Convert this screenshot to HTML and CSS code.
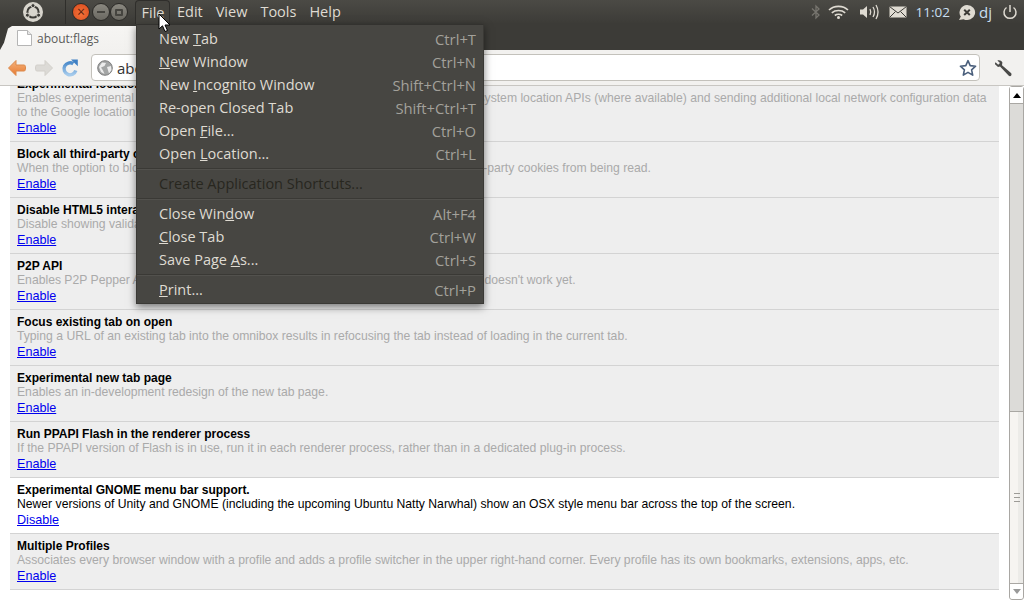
FILE: index.html
```html
<!DOCTYPE html>
<html lang="en">
<head>
<meta charset="utf-8">
<title>about:flags</title>
<link rel="stylesheet" href="styles.css">
</head>
<body>
<div class="panel">
  <div class="logo-cell">
    <svg width="22" height="22" viewBox="0 0 22 22"><circle cx="11" cy="11" r="10" fill="#d8d5cd"/><circle cx="11" cy="11" r="5.6" fill="none" stroke="#3c3b37" stroke-width="2"/><circle cx="11" cy="4.6" r="2" fill="#3c3b37" stroke="#d8d5cd"/><circle cx="5.4" cy="14.2" r="2" fill="#3c3b37" stroke="#d8d5cd"/><circle cx="16.6" cy="14.2" r="2" fill="#3c3b37" stroke="#d8d5cd"/></svg>
  </div>
  <div class="win-btns">
    <span class="wb wb-close">×</span>
    <span class="wb wb-min"><i class="min-bar"></i></span>
    <span class="wb wb-max"><i class="max-box"></i></span>
  </div>
  <nav class="menubar">
    <span class="mb-item mb-open">File</span>
    <span class="mb-item">Edit</span>
    <span class="mb-item">View</span>
    <span class="mb-item">Tools</span>
    <span class="mb-item">Help</span>
  </nav>
  <div class="tray">
    <svg class="t-bt" width="10" height="16" viewBox="0 0 10 16"><path d="M1 4.500 8 11 5 14V2l3 3-7 6.500" fill="none" stroke="#77756f" stroke-width="1.300"/></svg>
    <svg class="t-wifi" width="21" height="14" viewBox="0 0 21 14"><g fill="none" stroke="#dfdbd2" stroke-width="1.600"><path d="M1 5c5-4.800 14-4.800 19 0"/><path d="M3.800 7.800c3.500-3 9.900-3 13.400 0"/><path d="M6.800 10.500c2-1.500 5.400-1.500 7.400 0"/></g><circle cx="10.500" cy="12.500" r="1.500" fill="#dfdbd2"/></svg>
    <svg class="t-vol" width="20" height="16" viewBox="0 0 20 16"><path d="M1 5.500h3L8 2v12L4 10.500H1z" fill="#dfdbd2"/><g fill="none" stroke="#dfdbd2" stroke-width="1.300"><path d="M11 5c1 2 1 4 0 6"/><path d="M14 3c1.800 3 1.800 7 0 10"/><path d="M17 1c2.600 4.500 2.600 9.500 0 14"/></g></svg>
    <svg class="t-mail" width="18" height="12" viewBox="0 0 18 12"><rect x=".5" y=".5" width="17" height="11" fill="#dfdbd2"/><path d="M.5.500 9 7l8.500-6.500M.5 11.500 6.500 5.500M17.500 11.500l-6-6" fill="none" stroke="#3c3b37"/></svg>
    <span class="t-time">11:02</span>
    <svg class="t-chat" width="18" height="17" viewBox="0 0 18 17"><path d="M9 1a8 7.500 0 1 1-3.500 14.200L1 16l1.800-3.400A8 7.500 0 0 1 9 1z" fill="#dfdbd2"/><path d="M6.200 5.800 11.800 11M11.800 5.800 6.200 11" stroke="#3c3b37" stroke-width="2"/></svg>
    <span class="t-user">dj</span>
    <svg class="t-power" width="16" height="16" viewBox="0 0 16 16"><path d="M4.500 3.500a6 6 0 1 0 7 0" fill="none" stroke="#dfdbd2" stroke-width="1.500"/><path d="M8 1v7" stroke="#dfdbd2" stroke-width="1.500"/></svg>
  </div>
</div>

<div class="tabstrip">
  <div class="tab">
    <svg width="15" height="16" viewBox="0 0 15 16"><path d="M.5.500h10l4 4v11H.5z" fill="#fff" stroke="#b5b5b5"/><path d="M10.500.500v4h4" fill="#e6e6e6" stroke="#b5b5b5"/></svg>
    <span class="tab-title">about:flags</span>
  </div>
</div>

<div class="toolbar">
  <svg class="tb-icon" width="20" height="18" viewBox="0 0 20 18"><defs><linearGradient id="bk" x1="0" y1="0" x2="0" y2="1"><stop offset="0" stop-color="#f4b27c"/><stop offset="1" stop-color="#e87a30"/></linearGradient></defs><path d="M9 1.500 1.500 9 9 16.500V12h8c1.200 0 1.500-1 1.500-3s-.3-3-1.500-3H9z" fill="url(#bk)" stroke="#dc8a4c"/></svg>
  <svg class="tb-icon" width="20" height="18" viewBox="0 0 20 18"><path d="M11 1.500 18.500 9 11 16.500V12H3c-1.200 0-1.500-1-1.500-3s.3-3 1.500-3h8z" fill="#dcdad6" stroke="#d2cfca"/></svg>
  <svg class="tb-icon" width="18" height="20" viewBox="0 0 18 20"><defs><linearGradient id="rl" x1="0" y1="0" x2="0" y2="1"><stop offset="0" stop-color="#4d8ccb"/><stop offset="1" stop-color="#a6cbec"/></linearGradient></defs><path d="M14.800 12.500A6 6 0 1 1 12.300 5.800" fill="none" stroke="url(#rl)" stroke-width="3.400"/><path d="M10 1.500h6.800v6.800z" fill="#3f80c4"/></svg>
  <div class="omnibox">
    <svg width="16" height="16" viewBox="0 0 16 16"><circle cx="8" cy="8" r="7.300" fill="#a3a5a5" stroke="#7e7e7e"/><path d="M5 2.500 9 3 7.500 6 4 7.500 6 10.500 7.500 14 4 12 2 7zM10 7l4-1 .5 4-2.500 3.500z" fill="#ececec"/></svg>
    <span class="omni-text">about:flags</span>
    <svg class="star" width="18" height="18" viewBox="0 0 18 18"><path d="M9 1.700 11.200 6.600 16.600 7.200 12.600 10.800 13.700 16.100 9 13.400 4.300 16.100 5.400 10.800 1.400 7.200 6.800 6.600z" fill="#fff" stroke="#4a5f7c" stroke-width="1.600" stroke-linejoin="round"/></svg>
  </div>
  <svg class="wrench" width="18" height="18" viewBox="0 0 18 18"><path d="M1 5.200 4 8l2-.600 8.800 9.400c.8.600 2 .5 2.400-.3.500-.8.400-1.700-.2-2.400L8 6.200 8.400 3.500C7.500 1.500 5.300.7 3.400 1.400L6 4 4.200 5.800 1.500 3.300C1 3.800.9 4.500 1 5.200z" fill="#4a4a48"/></svg>
</div>

<div class="content">
  <main class="page">
    <div class="clip">
      <section class="exp first">
        <div class="exp-title">Experimental location features</div>
        <div class="exp-desc">Enables experimental extensions to the geolocation feature. Includes using operating system location APIs (where available) and sending additional local network configuration data to the Google location service to provide higher accuracy positioning.</div>
        <a class="exp-link">Enable</a>
      </section>
      <section class="exp">
        <div class="exp-title">Block all third-party cookies</div>
        <div class="exp-desc">When the option to block third-party cookies is enabled in your prefs, also prevent third-party cookies from being read.</div>
        <a class="exp-link">Enable</a>
      </section>
      <section class="exp">
        <div class="exp-title">Disable HTML5 interactive form validation</div>
        <div class="exp-desc">Disable showing validation messages and preventing form submission.</div>
        <a class="exp-link">Enable</a>
      </section>
      <section class="exp">
        <div class="exp-title">P2P API</div>
        <div class="exp-desc">Enables P2P Pepper API and P2P JavaScript API. The API is under development, and doesn't work yet.</div>
        <a class="exp-link">Enable</a>
      </section>
      <section class="exp">
        <div class="exp-title">Focus existing tab on open</div>
        <div class="exp-desc">Typing a URL of an existing tab into the omnibox results in refocusing the tab instead of loading in the current tab.</div>
        <a class="exp-link">Enable</a>
      </section>
      <section class="exp">
        <div class="exp-title">Experimental new tab page</div>
        <div class="exp-desc">Enables an in-development redesign of the new tab page.</div>
        <a class="exp-link">Enable</a>
      </section>
      <section class="exp">
        <div class="exp-title">Run PPAPI Flash in the renderer process</div>
        <div class="exp-desc">If the PPAPI version of Flash is in use, run it in each renderer process, rather than in a dedicated plug-in process.</div>
        <a class="exp-link">Enable</a>
      </section>
      <section class="exp on">
        <div class="exp-title">Experimental GNOME menu bar support.</div>
        <div class="exp-desc">Newer versions of Unity and GNOME (including the upcoming Ubuntu Natty Narwhal) show an OSX style menu bar across the top of the screen.</div>
        <a class="exp-link">Disable</a>
      </section>
      <section class="exp">
        <div class="exp-title">Multiple Profiles</div>
        <div class="exp-desc">Associates every browser window with a profile and adds a profile switcher in the upper right-hand corner. Every profile has its own bookmarks, extensions, apps, etc.</div>
        <a class="exp-link">Enable</a>
      </section>
    </div>
  </main>
  <aside class="scrollbar">
    <div class="sb-btn"><i class="arr-up"></i></div>
    <div class="sb-track">
      <div class="sb-before"></div>
      <div class="sb-thumb"><i></i><i></i><i></i></div>
    </div>
    <div class="sb-btn sb-btn-down"><i class="arr-down"></i></div>
  </aside>
</div>

<div class="menu">
  <div class="mi"><span>New <u>T</u>ab</span><span class="sc">Ctrl+T</span></div>
  <div class="mi"><span><u>N</u>ew Window</span><span class="sc">Ctrl+N</span></div>
  <div class="mi"><span>New <u>I</u>ncognito Window</span><span class="sc">Shift+Ctrl+N</span></div>
  <div class="mi"><span>Re-open Closed Tab</span><span class="sc">Shift+Ctrl+T</span></div>
  <div class="mi"><span>Open <u>F</u>ile...</span><span class="sc">Ctrl+O</span></div>
  <div class="mi"><span>Open <u>L</u>ocation...</span><span class="sc">Ctrl+L</span></div>
  <div class="sep"></div>
  <div class="mi dis"><span>Create Application Shortcuts...</span></div>
  <div class="sep"></div>
  <div class="mi"><span>Close Win<u>d</u>ow</span><span class="sc">Alt+F4</span></div>
  <div class="mi"><span><u>C</u>lose Tab</span><span class="sc">Ctrl+W</span></div>
  <div class="mi"><span>Save Page <u>A</u>s...</span><span class="sc">Ctrl+S</span></div>
  <div class="sep"></div>
  <div class="mi"><span><u>P</u>rint...</span><span class="sc">Ctrl+P</span></div>
</div>

<svg class="cursor" width="13" height="20" viewBox="0 0 13 20"><path d="M1 1v15l3.500-3.200L7 18.500l2.500-1L7 12h5z" fill="#fff" stroke="#000"/></svg>
</body>
</html>
```
FILE: styles.css
```css
* { box-sizing: border-box; }
html, body { margin: 0; padding: 0; }
body {
  width: 1024px; height: 600px; overflow: hidden; position: relative;
  font-family: "Liberation Sans", Arial, sans-serif; background: #fff;
  display: flex; flex-direction: column;
}
.panel {
  height: 24px; flex: none; display: flex; align-items: center;
  background: linear-gradient(#4b4a45, #3c3b37);
  color: #dfdbd2; font: 14.500px "Open Sans", sans-serif;
}
.logo-cell { width: 66px; height: 24px; display: flex; align-items: center; justify-content: center; border-right: 1px solid #2f2e2b; }
.win-btns { display: flex; margin-left: 6px; width: 63px; }
.wb { width: 18px; height: 18px; border-radius: 50%; display: flex; align-items: center; justify-content: center; flex: none; }
.wb-close { background: radial-gradient(circle at 50% 60%, #f4733a, #d9491c); color: #5c2310; font-size: 14px; border: 1px solid #2c2b28; line-height: 1; margin-right: 2px; }
.wb-min, .wb-max { background: linear-gradient(#8a8880, #6a6861); border: 1px solid #2c2b28; }
.min-bar { width: 8px; height: 2px; background: #45443f; }
.max-box { width: 8px; height: 7px; border: 2px solid #45443f; border-radius: 1px; }
.menubar { display: flex; }
.mb-item { height: 24px; padding: 0 6.500px; line-height: 24px; }
.mb-open { background: #45443f; border-radius: 4px 4px 0 0; border: 1px solid #2f2e2b; border-bottom: 0; line-height: 23px; padding: 0 5px 0 5.500px; }
.tray { margin-left: auto; display: flex; align-items: center; padding-right: 6px; }
.t-bt { margin-right: 7px; }
.t-wifi { margin-right: 10px; }
.t-vol { margin-right: 10px; }
.t-mail { margin-right: 9px; }
.t-time { font-size: 13.500px; color: #c9dff0; margin-right: 8px; }
.t-chat { margin-right: 3px; }
.t-user { font-size: 15px; color: #c9dff0; margin-right: 10px; }
.tabstrip { height: 26px; flex: none; background: #3c3b37; padding-top: 2px; }
.tab {
  width: 200px; height: 24px; background: linear-gradient(#f6f5f3, #f2f1ef);
  clip-path: polygon(0 100%, 4px 70%, 8px 10%, 12px 0, 100% 0, 100% 100%);
  display: flex; align-items: center; gap: 5px; padding-left: 17px;
  font: 12px "Open Sans", sans-serif; color: #4a4a48;
}
.tab-title { color: #5a5a58; }
.toolbar {
  height: 36px; flex: none; background: #f2f1ef; border-bottom: 1px solid #c8c6c2;
  display: flex; align-items: center; padding: 0 6px 0 7px;
}
.tb-icon { margin-right: 7px; }
.omnibox {
  width: 889px; height: 27px; margin-left: 5px; background: #fff; border: 1px solid #c3c1bb; border-radius: 4px;
  display: flex; align-items: center; padding: 0 2px 0 5px; gap: 4px;
  font: 15px "Open Sans", sans-serif; color: #333;
}
.omni-text { flex: 1; }
.star { flex: none; }
.wrench { margin-left: 14px; }
.content { flex: 1; display: flex; min-height: 0; background: #fff; }
.page { flex: 1; min-width: 0; padding: 0 10px; overflow: hidden; }
.clip { margin-top: -29px; }
.exp { height: 56px; padding: 5px 2px 0 7px; background: #eee; border-bottom: 1px solid #d3d3d3; font-size: 12px; line-height: 14px; }
.first { height: 85px; padding-top: 20px; }
.on { background: #fff; }
.exp-title { font-weight: bold; color: #000; }
.exp-desc { color: #aaa; font-size: 12.180px; }
.on .exp-desc { color: #000; }
.exp-link { display: block; margin-top: 2px; color: #00e; text-decoration: underline; font-size: 12.600px; }
.scrollbar { width: 15px; flex: none; border: 1px solid #a9a7a3; border-radius: 3px; background: #f4f2ef; display: flex; flex-direction: column; }
.sb-btn { height: 16px; background: #fff; display: flex; align-items: center; justify-content: center; flex: none; }
.sb-btn-down { border-top: 1px solid #a9a7a3; border-radius: 0 0 3px 3px; }
.arr-up { border: 4px solid transparent; border-top: 0; border-bottom: 5px solid #000; }
.arr-down { border: 4px solid transparent; border-bottom: 0; border-top: 5px solid #999; }
.sb-track { flex: 1; display: flex; flex-direction: column; }
.sb-before { height: 309px; background: #dcdbd8; border-top: 1px solid #a9a7a3; border-bottom: 1px solid #a9a7a3; }
.sb-thumb { flex: 1; display: flex; flex-direction: column; justify-content: center; align-items: center; gap: 3px; background: linear-gradient(90deg, #f6f4f1 60%, #ecebe8 60%); }
.sb-thumb i { width: 6px; height: 1px; background: #9d9b97; }
.menu {
  position: absolute; left: 136px; top: 24px; width: 348px; height: 280px; padding-top: 2px;
  background: #474642; border: 1px solid #3a3935; border-top-color: #33322f;
  box-shadow: 0 3px 8px rgba(0,0,0,.5);
  color: #dfdbd2; font: 14.500px "Open Sans", sans-serif;
}
.mi { height: 23px; padding: 0 7px 0 22px; display: flex; align-items: center; justify-content: space-between; white-space: nowrap; }
.sc { color: #a3a19b; font-size: 14.800px; }
.dis { color: #28271f; }
.sep { height: 2px; margin: 3px 0 2px; background: #3a3935; border-bottom: 1px solid #52514d; }
.cursor { position: absolute; left: 158px; top: 13px; }
```
